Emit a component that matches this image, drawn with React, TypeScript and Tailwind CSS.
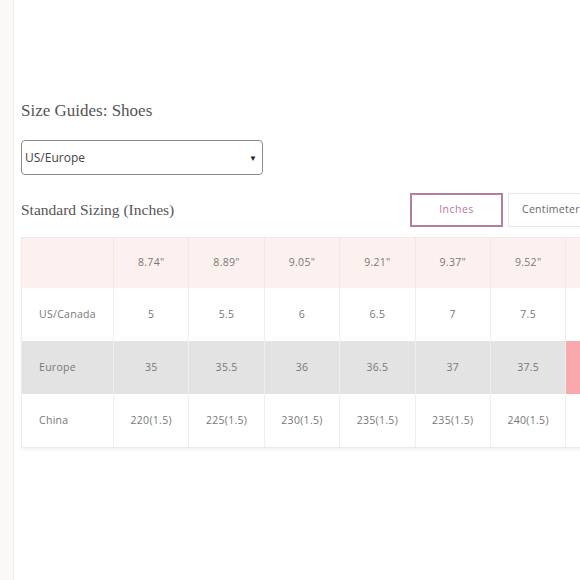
import React from 'react';

// ── 사이즈 데이터 ──
const headers = ['8.74"', '8.89"', '9.05"', '9.21"', '9.37"', '9.52"'];
const rows: { label: string; values: string[]; bg: string }[] = [
  { label: 'US/Canada', values: ['5', '5.5', '6', '6.5', '7', '7.5'], bg: 'bg-white' },
  { label: 'Europe', values: ['35', '35.5', '36', '36.5', '37', '37.5'], bg: 'bg-[#e3e3e3]' },
  { label: 'China', values: ['220(1.5)', '225(1.5)', '230(1.5)', '235(1.5)', '235(1.5)', '240(1.5)'], bg: 'bg-white' },
];

const serif = "font-['Liberation_Serif',serif]";
const sans = "font-['Open_Sans',sans-serif]";

export default function App() {
  return (
    <div className="w-[580px] h-[580px] overflow-hidden flex bg-white">
      <div className="w-[14px] shrink-0 bg-[#fbf8f8] border-r border-[#f3eeee]" />

      <div className="flex-1 pl-[7px] pt-[100px] min-w-0">
        <h1 className={`${serif} text-[17px] leading-[22px] text-[#555]`}>Size Guides: Shoes</h1>

        <div className="mt-[18px] w-[242px] h-[35px] rounded-[4px] border-[1.5px] border-[#8a8a8a] flex items-center justify-between pl-[3px] pr-[5px]">
          <span className={`${sans} text-[12px] text-[#444]`}>US/Europe</span>
          <span className="text-[8px] text-[#222]">▼</span>
        </div>

        <div className="mt-[18px] flex items-center h-[34px]">
          <h2 className={`${serif} text-[15.5px] text-[#555] w-[389px] shrink-0`}>Standard Sizing (Inches)</h2>
          <div className={`${sans} w-[93px] shrink-0 h-[34px] border-2 border-[#b57e9c] flex items-center justify-center text-[10.5px] tracking-[0.5px] text-[#c0739e]`}>
            Inches
          </div>
          <div className={`${sans} ml-[5px] w-[90px] shrink-0 h-[34px] border border-[#e6e6e6] flex items-center pl-[13px] text-[10.5px] tracking-[0.3px] text-[#666]`}>
            Centimeter
          </div>
        </div>

        <div className={`${sans} mt-[10px] w-max border border-[#eeeaea] shadow-[0_2px_3px_rgba(0,0,0,0.05)] text-[10.5px] tracking-[0.3px] text-[#777]`}>
          <div className="flex h-[50px] bg-[#fdf1f0]">
            <div className="w-[92px] border-r border-[#f4e6e5]" />
            {headers.map((h) => (
              <div key={h} className="w-[75.4px] border-r border-[#f4e6e5] flex items-center justify-center">{h}</div>
            ))}
            <div className="w-[75.4px] border-r border-[#f4e6e5]" />
          </div>
          {rows.map((r) => (
            <div key={r.label} className={`flex h-[53px] ${r.bg}`}>
              <div className="w-[92px] border-r border-[#f1eeee] flex items-center pl-[17px]">{r.label}</div>
              {r.values.map((v, i) => (
                <div key={i} className="w-[75.4px] border-r border-[#f1eeee] flex items-center justify-center">
                  {v}
                </div>
              ))}
              <div className={`w-[75.4px] border-r border-[#f1eeee] ${r.label === 'Europe' ? 'bg-[#f9a8ab]' : ''}`} />
            </div>
          ))}
        </div>
      </div>
    </div>
  );
}
